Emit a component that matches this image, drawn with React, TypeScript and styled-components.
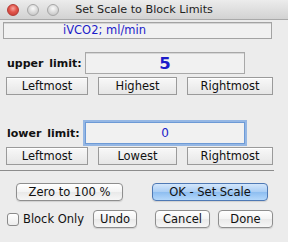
import styled, { createGlobalStyle } from 'styled-components';

const GlobalStyle = createGlobalStyle`
  html, body {
    margin: 0;
    padding: 0;
    background: #ececec;
  }
  * {
    box-sizing: border-box;
  }
`;

const Window = styled.div`
  width: 288px;
  height: 242px;
  background: #ececec;
  font-family: 'DejaVu Sans', 'Liberation Sans', sans-serif;
  font-size: 11.5px;
  color: #111;
  overflow: hidden;
`;

const TitleBar = styled.div`
  position: relative;
  height: 20px;
  display: flex;
  align-items: center;
  justify-content: center;
  background: linear-gradient(#ececec, #d2d2d2);
  border-bottom: 1px solid #a9a9a9;
`;

const Lights = styled.div`
  position: absolute;
  left: 7px;
  top: 4px;
  display: flex;
  gap: 8px;
`;

const Light = styled.span<{ $red?: boolean }>`
  width: 12px;
  height: 12px;
  border-radius: 50%;
  border: 1px solid ${({ $red }) => ($red ? '#b33a34' : '#a6a6a6')};
  background: ${({ $red }) =>
    $red
      ? 'radial-gradient(circle at 50% 35%, #f6a8a1 0%, #e2544a 45%, #c13a32 100%)'
      : 'radial-gradient(circle at 50% 35%, #fafafa 0%, #dadada 50%, #bdbdbd 100%)'};
`;

const Title = styled.span`
  font-size: 11.2px;
  color: #222;
`;

const Body = styled.div`
  padding-top: 2px;
`;

const UnitsField = styled.div`
  margin-left: 3px;
  width: 269px;
  height: 17px;
  border: 1px solid #a3a3a3;
  background: #f1f1f1;
  box-shadow: inset 0 1px 0 #d4d4d4;
  color: #1c1cc9;
  padding-left: 59px;
  line-height: 15px;
`;

const LimitRow = styled.div<{ $top: number }>`
  display: flex;
  align-items: center;
  margin-top: ${({ $top }) => $top}px;
  padding-left: 7px;
`;

const Label = styled.span`
  width: 78px;
  font-weight: bold;
  font-size: 11px;
  word-spacing: 2px;
`;

const ValueField = styled.div<{ $focused?: boolean; $big?: boolean }>`
  width: 160px;
  height: 22px;
  display: flex;
  align-items: center;
  justify-content: center;
  background: #f1f1f1;
  color: #1c1cc9;
  font-size: ${({ $big }) => ($big ? '16.5px' : '12px')};
  font-weight: ${({ $big }) => ($big ? 'bold' : 'normal')};
  border: 1px solid ${({ $focused }) => ($focused ? '#6d9ad6' : '#a8a8a8')};
  box-shadow: ${({ $focused }) =>
    $focused ? '0 0 0 2px rgba(120, 165, 225, 0.75)' : 'inset 0 1px 0 #d6d6d6'};
`;

const ButtonRow = styled.div`
  display: grid;
  grid-template-columns: 82px 79px 86px;
  justify-content: space-between;
  width: 267px;
  margin: 3px 0 0 6px;
`;

const SquareButton = styled.button`
  height: 18px;
  padding: 0;
  font-family: inherit;
  font-size: 11.5px;
  color: #111;
  border: 1px solid #9a9a9a;
  border-radius: 0;
  background: linear-gradient(#f8f8f8, #e6e6e6);
  box-shadow: inset 0 1px 0 #ffffff;
`;

const Divider = styled.div`
  width: 274px;
  height: 1px;
  margin-top: 5px;
  background: #8c8c8c;
`;

const ActionRow = styled.div<{ $top: number }>`
  display: flex;
  align-items: center;
  margin-top: ${({ $top }) => $top}px;
`;

const RoundButton = styled.button<{ $w: number; $left: number; $primary?: boolean }>`
  width: ${({ $w }) => $w}px;
  height: 18px;
  margin-left: ${({ $left }) => $left}px;
  padding: 0;
  font-family: inherit;
  font-size: 11.5px;
  color: #111;
  border-radius: 4px;
  border: 1px solid ${({ $primary }) => ($primary ? '#4f79b4' : '#8e8e8e')};
  background: ${({ $primary }) =>
    $primary
      ? 'linear-gradient(#d3e6fb 0%, #a9cdf4 50%, #8dbdf0 51%, #b4d8fb 100%)'
      : 'linear-gradient(#ffffff 0%, #f3f3f3 50%, #e9e9e9 51%, #f6f6f6 100%)'};
  box-shadow: 0 1px 1px rgba(0, 0, 0, 0.12);
`;

const CheckLabel = styled.label`
  display: flex;
  align-items: center;
  gap: 4px;
  margin-left: 7px;
  width: 86px;
`;

const CheckBox = styled.span`
  width: 12px;
  height: 13px;
  border-radius: 3px;
  border: 1px solid #8a8a8a;
  background: linear-gradient(#ffffff, #ececec);
`;

export default function App() {
  return (
    <>
      <GlobalStyle />
      <Window>
        <TitleBar>
          <Lights>
            <Light $red />
            <Light />
            <Light />
          </Lights>
          <Title>Set Scale to Block Limits</Title>
        </TitleBar>
        <Body>
          <UnitsField>iVCO2; ml/min</UnitsField>

          <LimitRow $top={13}>
            <Label>upper limit:</Label>
            <ValueField $big>5</ValueField>
          </LimitRow>
          <ButtonRow>
            <SquareButton>Leftmost</SquareButton>
            <SquareButton>Highest</SquareButton>
            <SquareButton>Rightmost</SquareButton>
          </ButtonRow>

          <LimitRow $top={27}>
            <Label>lower limit:</Label>
            <ValueField $focused>0</ValueField>
          </LimitRow>
          <ButtonRow>
            <SquareButton>Leftmost</SquareButton>
            <SquareButton>Lowest</SquareButton>
            <SquareButton>Rightmost</SquareButton>
          </ButtonRow>

          <Divider />

          <ActionRow $top={12}>
            <RoundButton $w={107} $left={16}>Zero to 100 %</RoundButton>
            <RoundButton $w={116} $left={29} $primary>OK - Set Scale</RoundButton>
          </ActionRow>
          <ActionRow $top={9}>
            <CheckLabel>
              <CheckBox />
              Block Only
            </CheckLabel>
            <RoundButton $w={44} $left={0}>Undo</RoundButton>
            <RoundButton $w={55} $left={18}>Cancel</RoundButton>
            <RoundButton $w={55} $left={8}>Done</RoundButton>
          </ActionRow>
        </Body>
      </Window>
    </>
  );
}
